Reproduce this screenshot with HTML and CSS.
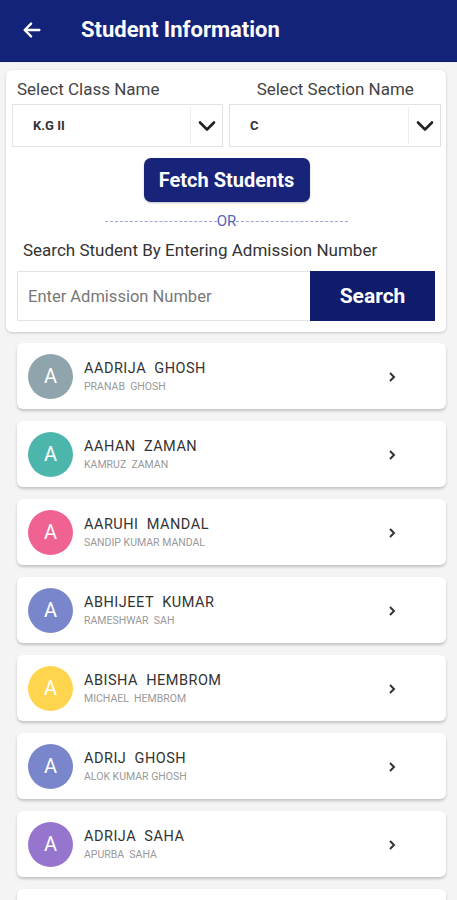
FILE: index.html
```html
<!DOCTYPE html>
<html lang="en">
<head>
    <meta charset="UTF-8">
    <meta name="viewport" content="width=device-width, initial-scale=1.0">
    <title>Student Information</title>
    <link rel="stylesheet" href="styles.css">
</head>
<body>
    <div class="topbar">
        <svg class="back" width="22" height="22" viewBox="0 0 24 24"><path d="M20 12H5M11 5l-7 7 7 7" fill="none" stroke="#fff" stroke-width="2.6" stroke-linecap="round" stroke-linejoin="round"/></svg>
        <h1>Student Information</h1>
    </div>

    <div class="filter">
        <div class="labels">
            <span class="lbl-left">Select Class Name</span>
            <span class="lbl-right">Select Section Name</span>
        </div>
        <div class="selects">
            <div class="select">
                <span class="val">K.G II</span>
                <span class="arrow"><svg width="18" height="12" viewBox="0 0 18 12"><path d="M2 2.5l7 7 7-7" fill="none" stroke="#222" stroke-width="2.6" stroke-linecap="round" stroke-linejoin="round"/></svg></span>
            </div>
            <div class="select">
                <span class="val">C</span>
                <span class="arrow"><svg width="18" height="12" viewBox="0 0 18 12"><path d="M2 2.5l7 7 7-7" fill="none" stroke="#222" stroke-width="2.6" stroke-linecap="round" stroke-linejoin="round"/></svg></span>
            </div>
        </div>
        <button class="fetch">Fetch Students</button>
        <div class="or"><span class="dash"></span><span>OR</span><span class="dash"></span></div>
        <div class="hint">Search Student By Entering Admission Number</div>
        <div class="search-row">
            <div class="input">Enter Admission Number</div>
            <button class="search">Search</button>
        </div>
    </div>

    <div class="list">
        <div class="item">
            <div class="avatar c1">A</div>
            <div class="names"><div class="name">AADRIJA&nbsp; GHOSH</div><div class="parent">PRANAB&nbsp; GHOSH</div></div>
            <svg class="chev" width="8" height="12" viewBox="0 0 8 12"><path d="M2 2l4 4-4 4" fill="none" stroke="#333" stroke-width="2"/></svg>
        </div>
        <div class="item">
            <div class="avatar c2">A</div>
            <div class="names"><div class="name">AAHAN&nbsp; ZAMAN</div><div class="parent">KAMRUZ&nbsp; ZAMAN</div></div>
            <svg class="chev" width="8" height="12" viewBox="0 0 8 12"><path d="M2 2l4 4-4 4" fill="none" stroke="#333" stroke-width="2"/></svg>
        </div>
        <div class="item">
            <div class="avatar c3">A</div>
            <div class="names"><div class="name">AARUHI&nbsp; MANDAL</div><div class="parent">SANDIP KUMAR MANDAL</div></div>
            <svg class="chev" width="8" height="12" viewBox="0 0 8 12"><path d="M2 2l4 4-4 4" fill="none" stroke="#333" stroke-width="2"/></svg>
        </div>
        <div class="item">
            <div class="avatar c4">A</div>
            <div class="names"><div class="name">ABHIJEET&nbsp; KUMAR</div><div class="parent">RAMESHWAR&nbsp; SAH</div></div>
            <svg class="chev" width="8" height="12" viewBox="0 0 8 12"><path d="M2 2l4 4-4 4" fill="none" stroke="#333" stroke-width="2"/></svg>
        </div>
        <div class="item">
            <div class="avatar c5">A</div>
            <div class="names"><div class="name">ABISHA&nbsp; HEMBROM</div><div class="parent">MICHAEL&nbsp; HEMBROM</div></div>
            <svg class="chev" width="8" height="12" viewBox="0 0 8 12"><path d="M2 2l4 4-4 4" fill="none" stroke="#333" stroke-width="2"/></svg>
        </div>
        <div class="item">
            <div class="avatar c4">A</div>
            <div class="names"><div class="name">ADRIJ&nbsp; GHOSH</div><div class="parent">ALOK KUMAR GHOSH</div></div>
            <svg class="chev" width="8" height="12" viewBox="0 0 8 12"><path d="M2 2l4 4-4 4" fill="none" stroke="#333" stroke-width="2"/></svg>
        </div>
        <div class="item">
            <div class="avatar c6">A</div>
            <div class="names"><div class="name">ADRIJA&nbsp; SAHA</div><div class="parent">APURBA&nbsp; SAHA</div></div>
            <svg class="chev" width="8" height="12" viewBox="0 0 8 12"><path d="M2 2l4 4-4 4" fill="none" stroke="#333" stroke-width="2"/></svg>
        </div>
        <div class="item">
            <div class="avatar c3"></div>
        </div>
    </div>
</body>
</html>
```

FILE: styles.css
```css
*{margin:0;padding:0;box-sizing:border-box;}
html,body{width:100%;height:100%;}
body{background:#f4f4f4;font-family:Roboto,"Liberation Sans",sans-serif;overflow:hidden;}

.topbar{
    height:62px;
    background:#14237a;
    display:flex;
    align-items:center;
    padding-left:21px;
    border-bottom:1px solid #0d1a66;
}
.topbar .back{display:block;margin-top:-2px;}
.topbar h1{
    color:#fff;
    font-size:22px;
    font-weight:700;
    margin-left:38px;
    margin-top:-2px;
}

.filter{
    margin:8px 11px 0 6px;
    background:#fff;
    border-radius:6px;
    box-shadow:0 1px 3px rgba(0,0,0,0.18);
    padding:8px 5px 11px 6px;
}
.labels{
    display:grid;
    grid-template-columns:1fr 1fr;
    gap:6px;
    font-size:17px;
    color:#444;
    line-height:22px;
    height:26px;
}
.lbl-left{padding-left:5px;}
.lbl-right{text-align:center;}
.selects{
    display:grid;
    grid-template-columns:211px 212px;
    gap:6px;
}
.select{
    height:43px;
    border:1px solid #e2e2e2;
    display:flex;
    align-items:center;
}
.select .val{
    flex:1;
    padding-left:20px;
    font-size:13px;
    font-weight:700;
    color:#333;
}
.select .arrow{
    width:32px;
    height:37px;
    border-left:1px solid #ececec;
    display:flex;
    align-items:center;
    justify-content:center;
}
.fetch{
    display:block;
    margin:11px auto 0;
    width:166px;
    height:44px;
    background:#17247a;
    color:#fff;
    border:none;
    border-radius:7px;
    font-family:Roboto,"Liberation Sans",sans-serif;
    font-size:20px;
    font-weight:700;
    box-shadow:0 1px 2px rgba(0,0,0,0.25);
}
.or{
    display:flex;
    align-items:center;
    justify-content:center;
    margin-top:11px;
    height:16px;
    color:#5566b8;
    font-size:15px;
}
.or .dash{
    width:112px;
    border-top:1px dashed #9aa6d6;
}
.hint{
    margin-top:11px;
    padding-left:11px;
    font-size:17px;
    color:#333;
    line-height:20px;
}
.search-row{
    display:flex;
    margin:11px 6px 0 5px;
    height:50px;
}
.input{
    flex:1;
    border:1px solid #e2e2e2;
    border-right:none;
    display:flex;
    align-items:center;
    padding-left:10px;
    font-size:16.5px;
    color:#777;
}
.search{
    width:125px;
    background:#0f1c6c;
    color:#fff;
    border:none;
    font-family:Roboto,"Liberation Sans",sans-serif;
    font-size:21px;
    font-weight:700;
}

.list{
    display:flex;
    flex-direction:column;
    gap:12px;
    margin:11px 11px 0 17px;
}
.item{
    height:66px;
    flex-shrink:0;
    background:#fff;
    border-radius:6px;
    box-shadow:0 2px 3px rgba(0,0,0,0.2);
    display:flex;
    align-items:center;
    padding-left:11px;
}
.avatar{
    width:45px;
    height:45px;
    border-radius:50%;
    color:#fff;
    font-size:20px;
    display:flex;
    align-items:center;
    justify-content:center;
    flex-shrink:0;
}
.c1{background:#90a4ae;}
.c2{background:#4db6ac;}
.c3{background:#f06292;}
.c4{background:#7986cb;}
.c5{background:#ffd54f;}
.c6{background:#9575cd;}
.names{
    flex:1;
    margin-left:11px;
    margin-top:2px;
}
.name{
    font-size:14.5px;
    color:#333;
    letter-spacing:0.5px;
    line-height:18px;
}
.parent{
    font-size:10.5px;
    color:#999;
    line-height:14px;
    margin-top:2px;
}
.chev{
    display:block;
    margin-right:50px;
    margin-top:2px;
}
```
